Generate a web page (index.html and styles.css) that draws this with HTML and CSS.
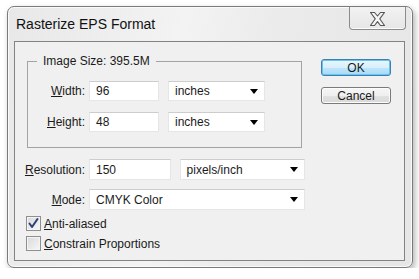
FILE: index.html
```html
<!DOCTYPE html>
<html lang="en">
<head>
    <meta charset="UTF-8">
    <title>Rasterize EPS Format</title>
    <link rel="stylesheet" href="styles.css">
</head>
<body>

    <div class="window">
        <div class="titlebar">
            <div class="title">Rasterize EPS Format</div>
            <div class="close">
                <svg width="17" height="16" viewBox="0 0 17 16">
                    <polygon points="1.5,1.5 5.5,1.5 8.5,5 11.5,1.5 15.5,1.5 10.7,7.8 15.5,14.5 11.5,14.5 8.5,10.6 5.5,14.5 1.5,14.5 6.3,7.8"
                             fill="#f6f6f6" stroke="#555" stroke-width="1.1" stroke-linejoin="round"/>
                </svg>
            </div>
        </div>

        <div class="client">
            <div class="main">
                <fieldset class="group">
                    <legend>Image Size: 395.5M</legend>
                    <div class="row">
                        <label class="label short"><u>W</u>idth:</label>
                        <div class="field w70">96</div>
                        <div class="select w97"><span>inches</span><i class="arrow"></i></div>
                    </div>
                    <div class="row">
                        <label class="label short"><u>H</u>eight:</label>
                        <div class="field w70">48</div>
                        <div class="select w97"><span>inches</span><i class="arrow"></i></div>
                    </div>
                </fieldset>

                <div class="row tall first">
                    <label class="label"><u>R</u>esolution:</label>
                    <div class="field w82">150</div>
                    <div class="select w126"><span>pixels/inch</span><i class="arrow"></i></div>
                </div>
                <div class="row tall">
                    <label class="label"><u>M</u>ode:</label>
                    <div class="select w216"><span>CMYK Color</span><i class="arrow"></i></div>
                </div>

                <div class="check first-check">
                    <span class="box">
                        <svg width="13" height="13" viewBox="0 0 13 13">
                            <path d="M2.5 6.5 L5 10 L10.5 2" fill="none" stroke="#2b3f7d" stroke-width="2" stroke-linecap="round" stroke-linejoin="round"/>
                        </svg>
                    </span>
                    <span><u>A</u>nti-aliased</span>
                </div>
                <div class="check">
                    <span class="box"></span>
                    <span><u>C</u>onstrain Proportions</span>
                </div>
            </div>

            <div class="buttons">
                <button class="btn default">OK</button>
                <button class="btn">Cancel</button>
            </div>
        </div>
    </div>

</body>
</html>
```

FILE: styles.css
```css
body {
    margin: 0;
    background-color: #fff;
    font-family: "Liberation Sans", Arial, sans-serif;
    font-size: 12px;
    color: #1a1a1a;
}
.window {
    margin: 6px 0 0 7px;
    width: 406px;
    height: 262px;
    box-sizing: border-box;
    border: 1px solid #7a7a7a;
    border-radius: 7px;
    background: linear-gradient(100deg, #e8e8e8 0%, #f3f3f3 40%, #ebebeb 60%, #e6e6e6 100%);
    box-shadow: inset 0 0 0 1px #fafafa, 2px 3px 6px rgba(0,0,0,0.3);
    padding: 0 7px 6px 6px;
    display: flex;
    flex-direction: column;
}
.titlebar {
    height: 34px;
    display: flex;
    margin-right: -1px;
}
.title {
    padding: 9px 0 0 2px;
    font-size: 14px;
    line-height: 16px;
    color: #111;
}
.close {
    margin-left: auto;
    width: 57px;
    height: 23px;
    border: 1px solid #8c8c8c;
    border-top: none;
    border-radius: 0 0 4px 4px;
    background: linear-gradient(#f2f2f2, #e6e6e6);
    box-shadow: inset 0 -1px 0 #fbfbfb;
    display: flex;
    align-items: center;
    justify-content: center;
    padding-top: 2px;
    box-sizing: border-box;
}
.client {
    flex: 1;
    border: 1px solid #838383;
    background-color: #f0f0f0;
    display: flex;
}
.main {
    width: 290px;
}
.group {
    margin: 12px 0 0 12px;
    padding: 0 0 15px 0;
    width: 275px;
    box-sizing: border-box;
    border: 1px solid #a3a3a3;
}
.group legend {
    margin-left: 9px;
    padding: 0 6px;
    line-height: 14px;
}
.group .row:first-of-type {
    margin-top: 13px;
}
.row {
    display: flex;
    align-items: center;
    height: 20px;
    margin-top: 11px;
}
.row.tall {
    height: 21px;
    margin-top: 9px;
}
.row.tall.first {
    margin-top: 11px;
}
.label {
    width: 70px;
    text-align: right;
    margin-right: 4px;
    flex-shrink: 0;
}
.label.short {
    width: 57px;
}
.field, .select {
    height: 100%;
    box-sizing: border-box;
    background: #fff;
    border: 1px solid #e6e6e6;
    border-top-color: #cdcdcd;
    display: flex;
    align-items: center;
    padding-left: 6px;
}
.select {
    margin-left: 9px;
    padding-right: 6px;
}
.row.tall .label + .select {
    margin-left: 0;
}
.select span {
    flex: 1;
}
.arrow {
    width: 0;
    height: 0;
    border-left: 4px solid transparent;
    border-right: 4px solid transparent;
    border-top: 5px solid #000;
}
.w70 { width: 70px; }
.w82 { width: 82px; }
.w97 { width: 97px; }
.w126 { width: 126px; }
.w216 { width: 216px; }
.check {
    display: flex;
    align-items: center;
    margin: 5px 0 0 11px;
    height: 15px;
}
.check.first-check {
    margin-top: 6px;
}
.box {
    width: 15px;
    height: 15px;
    box-sizing: border-box;
    border: 1px solid #8e8f8f;
    background: linear-gradient(135deg, #d9d9d9, #f7f7f7);
    box-shadow: inset 0 0 0 1px #f4f4f4;
    margin-right: 3px;
    display: flex;
    align-items: center;
    justify-content: center;
}
.buttons {
    padding: 17px 0 0 16px;
    display: flex;
    flex-direction: column;
    gap: 11px;
}
.btn {
    width: 70px;
    height: 17px;
    padding: 0;
    font-family: "Liberation Sans", Arial, sans-serif;
    font-size: 12px;
    color: #1a1a1a;
    border: 1px solid #7a7a7a;
    border-radius: 3px;
    background: linear-gradient(#f6f6f6 0%, #efefef 50%, #e3e3e3 51%, #d8d8d8 100%);
    box-shadow: inset 0 0 0 1px #fcfcfc;
    line-height: 14px;
}
.btn.default {
    border-color: #3c7fb1;
    background: linear-gradient(#eaf6fd 0%, #d9f0fc 50%, #bee6fd 51%, #a7d9f5 100%);
    box-shadow: inset 0 0 0 1px #68c5f0;
}
```
